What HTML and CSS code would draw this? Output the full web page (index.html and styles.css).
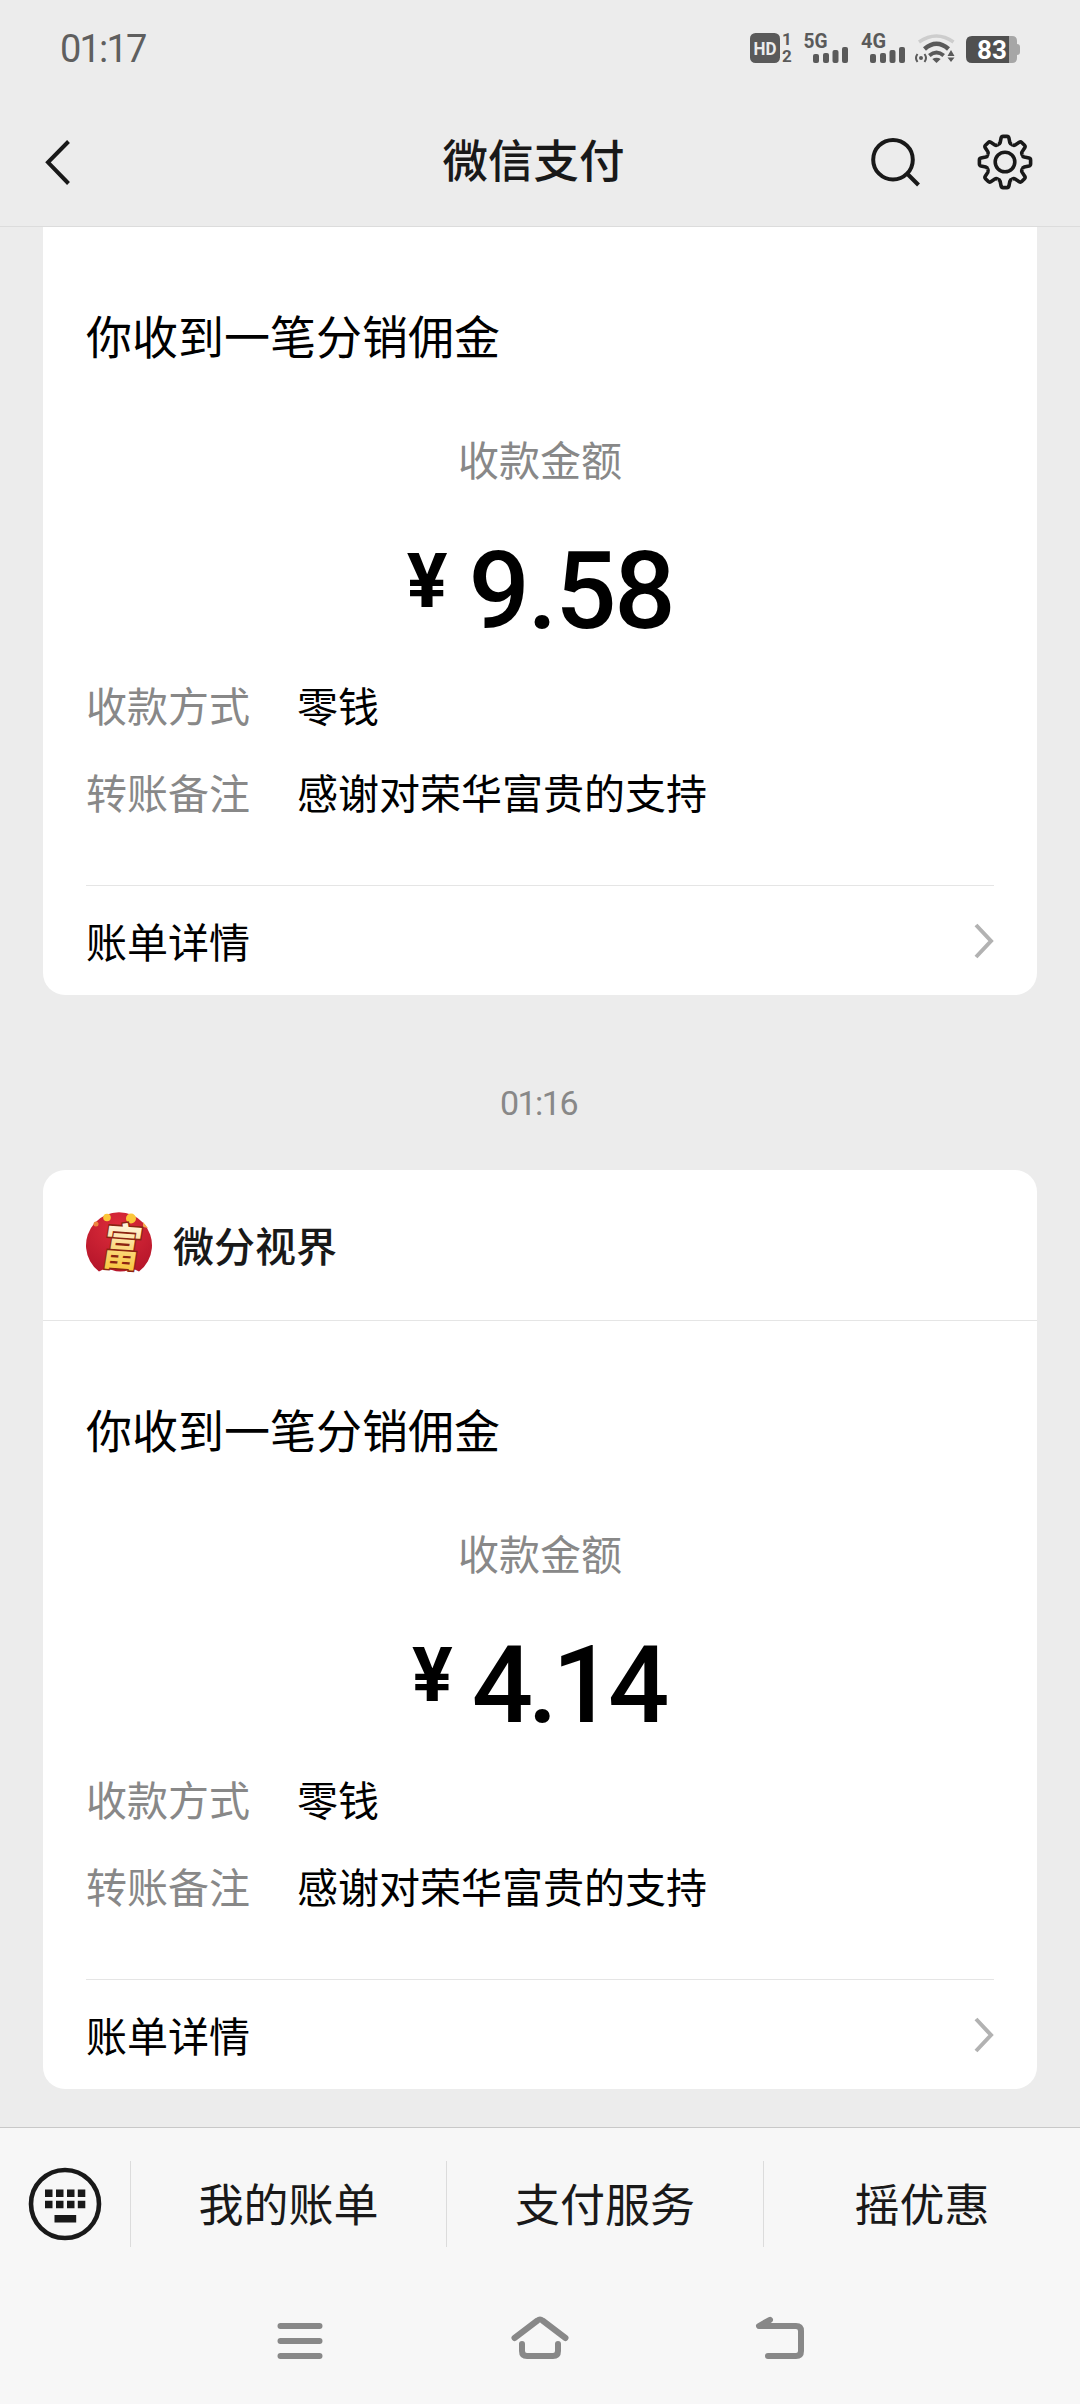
FILE: index.html
```html
<!DOCTYPE html>
<html lang="zh-CN">
<head>
<meta charset="utf-8">
<title>微信支付</title>
<link rel="stylesheet" href="styles.css">
</head>
<body>
<header class="top">
  <div class="status">
    <span class="clock">01:17</span>
    <svg class="status-icons" width="274" height="32" viewBox="748 32 274 32">
      <g fill="#5a5a5a">
        <rect x="750" y="33" width="30" height="30" rx="5.5"/>
        <text class="st-hd" x="765" y="55" textLength="23" lengthAdjust="spacingAndGlyphs" text-anchor="middle">HD</text>
        <text class="st-sim" x="787" y="45" text-anchor="middle">1</text>
        <text class="st-sim" x="787" y="62" text-anchor="middle">2</text>
        <text class="st-net" x="803.5" y="47.5" textLength="24" lengthAdjust="spacingAndGlyphs">5G</text>
        <text class="st-net" x="861" y="47.5" textLength="25" lengthAdjust="spacingAndGlyphs">4G</text>
        <g id="bars"><rect x="813" y="54" width="6" height="9" rx="2"/><rect x="823" y="53" width="6" height="10" rx="2"/><rect x="832.500" y="50" width="6" height="13" rx="2"/><rect x="842" y="47" width="6" height="16" rx="2"/></g>
        <use href="#bars" x="57"/>
        <path d="M936.500 63L932.300 59Q936.500 56.500 940.700 59Z"/>
        <circle cx="921" cy="58" r="2"/>
        <path d="M947.500 56L951 50L954.500 56ZM947.500 57.500L951 62L954.500 57.500Z"/>
      </g>
      <g fill="none" stroke="#5a5a5a">
        <path d="M929.300 55.500Q936.500 49.500 943.700 55.500" stroke-width="4"/>
        <path d="M924.500 49Q936.500 38.500 948.500 49" stroke-width="4.500"/>
        <path d="M919 42Q936.500 30 953.500 42" stroke="#cdcdcd" stroke-width="3.500"/>
        <path d="M917.500 54Q914.500 58 917.500 62M924.500 54Q927.500 58 924.500 62" stroke-width="2"/>
      </g>
      <path d="M1009 36H1012Q1017 36 1017 41V44Q1020 44 1020 47V52Q1020 55 1017 55V58Q1017 63 1012 63H1009Z" fill="#a6a6a6"/>
      <path d="M1009 36H972Q966 36 966 42V57Q966 63 972 63H1009Z" fill="#505050"/>
      <text class="st-bat" x="992" y="59" text-anchor="middle">83</text>
    </svg>
  </div>
  <nav class="bar">
    <div class="tools-left"><svg width="30" height="50" viewBox="43 136 30 50"><path d="M68.500 140.500L48 161.300L68.500 182.500" fill="none" stroke="#191919" stroke-width="4"/></svg></div>
    <h1 class="title">微信支付</h1>
    <div class="tools">
      <svg width="56" height="56" viewBox="868 133 56 56"><g fill="none" stroke="#191919" stroke-width="4"><circle cx="893" cy="158.700" r="19.800"/><path d="M907 172.500L918.500 184"/></g></svg>
      <svg width="58" height="58" viewBox="-29 -29 58 58"><g fill="none" stroke="#191919" stroke-width="3.600"><circle r="9.800"/>
        <path id="tooth" d="M-7.200-17.400Q-5.300-17.600-4.900-19.200L-3.900-24Q-3.500-25.600-2-25.600H2Q3.500-25.600 3.900-24L4.900-19.200Q5.300-17.600 7.200-17.400"/>
        <use href="#tooth" transform="rotate(45)"/><use href="#tooth" transform="rotate(90)"/><use href="#tooth" transform="rotate(135)"/><use href="#tooth" transform="rotate(180)"/><use href="#tooth" transform="rotate(225)"/><use href="#tooth" transform="rotate(270)"/><use href="#tooth" transform="rotate(315)"/></g></svg>
    </div>
  </nav>
</header>

<main class="feed">
  <article class="card card-cut">
    <div class="card-body">
      <h2 class="headline">你收到一笔分销佣金</h2>
      <div class="caption">收款金额</div>
      <div class="amount"><span class="yen">¥</span><span class="num">9.58</span></div>
      <dl class="rows">
        <dt>收款方式</dt><dd>零钱</dd>
        <dt>转账备注</dt><dd>感谢对荣华富贵的支持</dd>
      </dl>
      <div class="detail"><span>账单详情</span><svg width="20" height="36" viewBox="0 0 20 36"><path d="M2 2L17 18L2 34" fill="none" stroke="#b2b2b2" stroke-width="4"/></svg></div>
    </div>
  </article>

  <time class="stamp">01:16</time>

  <article class="card">
    <div class="sender">
      <svg width="66" height="66" viewBox="0 0 66 66">
        <defs>
          <radialGradient id="red" cx=".5" cy=".25" r=".8"><stop offset="0" stop-color="#de2d3b"/><stop offset="1" stop-color="#b5152a"/></radialGradient>
          <linearGradient id="gold" x1="0" y1="0" x2="0" y2="1"><stop offset=".25" stop-color="#fff3d8"/><stop offset=".55" stop-color="#fbd982"/><stop offset=".95" stop-color="#f7c12c"/></linearGradient>
        </defs>
        <path d="M13 59.500A33 33 0 1 1 53 59.500Q47 56 43 58Q34 61 26 58Q18 56 13 59.500Z" fill="url(#red)"/>
        <g fill="#fbc63a"><circle cx="21" cy="5.500" r="3.800"/><circle cx="45" cy="6.500" r="5"/><circle cx="10" cy="12" r="2.500" fill="#ee8540"/><path d="M57 10L62 16L57 15Z" fill="#f6a64b"/></g>
        <text class="logo" text-anchor="middle" transform="translate(33.500 53) rotate(4) skewX(-5) scale(1 1.300)">富</text>
      </svg>
      <span class="sender-name">微分视界</span>
    </div>
    <div class="card-body">
      <h2 class="headline">你收到一笔分销佣金</h2>
      <div class="caption">收款金额</div>
      <div class="amount amount-tight"><span class="yen">¥</span><span class="num">4.14</span></div>
      <dl class="rows">
        <dt>收款方式</dt><dd>零钱</dd>
        <dt>转账备注</dt><dd>感谢对荣华富贵的支持</dd>
      </dl>
      <div class="detail"><span>账单详情</span><svg width="20" height="36" viewBox="0 0 20 36"><path d="M2 2L17 18L2 34" fill="none" stroke="#b2b2b2" stroke-width="4"/></svg></div>
    </div>
  </article>
</main>

<footer class="bottom">
  <div class="menu">
    <div class="keyboard"><svg width="74" height="74" viewBox="-37 -37 74 74"><circle r="34" fill="none" stroke="#191919" stroke-width="4.600"/><path fill="#191919" d="M-20-14.500h7.500v7.500h-7.500zM-9-14.500h7.500v7.500h-7.500zM2-14.500h7.500v7.500h-7.500zM12.800-14.500h7.500v7.500h-7.500zM-20-3.300h7.500v7.500h-7.500zM-9-3.300h7.500v7.500h-7.500zM2-3.300h7.500v7.500h-7.500zM12.800-3.300h7.500v7.500h-7.500zM-10.500 11h21.700v7.500h-21.700z"/></svg></div>
    <div class="menu-item">我的账单</div>
    <div class="menu-item">支付服务</div>
    <div class="menu-item">摇优惠</div>
  </div>
  <div class="sysnav">
    <svg width="60" height="50" viewBox="270 2316 60 50"><path d="M280.500 2326H319.500M280.500 2341H319.500M280.500 2356H319.500" class="nav-line"/></svg>
    <svg width="60" height="50" viewBox="510 2316 60 50"><path d="M514.500 2338L537.500 2320.500Q540 2318.500 542.500 2320.500L565.500 2338M522 2344V2351Q522 2356 527 2356H553Q558 2356 558 2351V2344" class="nav-line"/></svg>
    <svg width="60" height="50" viewBox="750 2316 60 50"><path d="M770 2319.800L759 2326H796Q801 2326 801 2331V2351Q801 2356 796 2356H768" class="nav-line"/></svg>
  </div>
</footer>
</body>
</html>
```
FILE: styles.css
```css
* { box-sizing: border-box; }
body {
  margin: 0;
  width: 1080px;
  height: 2404px;
  display: flex;
  flex-direction: column;
  overflow: hidden;
  background: #ececec;
  color: #000;
  font-family: Roboto, "Noto Sans CJK SC", sans-serif;
}
svg { display: block; overflow: visible; flex: none; }
h1, h2, dl, dd { margin: 0; font-weight: 400; }

.top { height: 227px; border-bottom: 1px solid #dcdcdc; flex: none; }
.status {
  height: 96px;
  padding: 0 58px 0 60px;
  display: flex;
  justify-content: space-between;
  align-items: center;
}
.clock { font-size: 38px; letter-spacing: -1.8px; color: #5f5f5f; padding-top: 2px; }
.status-icons { font-family: Roboto, sans-serif; font-weight: 700; }
.st-hd { font-size: 19px; fill: #ececec; }
.st-sim { font-size: 17px; }
.st-net { font-size: 20px; }
.st-bat { font-size: 26px; fill: #fff; }

.bar {
  height: 131px;
  display: grid;
  grid-template-columns: 1fr auto 1fr;
  align-items: center;
  padding: 0 46px 0 37px;
}
.tools-left { padding-left: 6px; }
.title { font-size: 45.5px; font-weight: 500; color: #191919; line-height: 66px; padding: 3px 4px 0 0; }
.tools { display: flex; justify-content: flex-end; align-items: center; gap: 52px; }

.feed { flex: 1; padding: 0 43px; }
.card { background: #fff; border-radius: 22px; height: 919px; }
.card-cut { height: 768px; border-radius: 0 0 22px 22px; }
.sender {
  height: 151px;
  border-bottom: 1px solid #e5e5e5;
  padding: 0 43px;
  display: flex;
  align-items: center;
  gap: 21px;
}
.sender-name { font-size: 41px; font-weight: 500; color: #191919; padding-bottom: 3px; }
.logo {
  font: 700 38px "Noto Sans CJK SC", sans-serif;
  fill: url(#gold);
  stroke: #8b2412;
  stroke-width: 2.5px;
  paint-order: stroke;
}
.card-body { padding: 78px 43px 0; }
.headline { font-size: 46px; line-height: 66px; }
.caption { margin-top: 61px; font-size: 41px; line-height: 60px; color: #888; text-align: center; }
.amount {
  height: 126px;
  margin-top: 35px;
  display: flex;
  justify-content: center;
  align-items: flex-start;
  gap: 21px;
  font-weight: 500;
}
.yen { font-size: 76px; line-height: 108px; font-weight: 700; }
.num { font-size: 108px; line-height: 128px; letter-spacing: -2.4px; }
.amount-tight { gap: 19px; padding-right: 4px; }
.amount-tight .num { letter-spacing: -5.5px; }
.rows {
  display: grid;
  grid-template-columns: 211px 1fr;
  row-gap: 27px;
  margin-top: 25px;
  font-size: 41px;
  line-height: 60px;
}
.rows dt { color: #888; }
.detail {
  margin-top: 60px;
  height: 111px;
  border-top: 1px solid #e5e5e5;
  display: flex;
  justify-content: space-between;
  align-items: center;
  font-size: 41px;
}
.detail span { padding-bottom: 3px; }
.stamp {
  display: flex;
  height: 175px;
  padding: 40px 3px 0 0;
  align-items: center;
  justify-content: center;
  font-size: 34px;
  letter-spacing: -1.5px;
  color: #888;
}

.bottom { height: 277px; flex: none; background: #f7f7f7; border-top: 1px solid #c8c8c8; }
.menu {
  height: 151px;
  display: grid;
  grid-template-columns: 130px 316px 317px 317px;
  align-items: center;
}
.keyboard { display: flex; justify-content: center; }
.menu-item {
  height: 86px;
  border-left: 1px solid #dcdcdc;
  display: flex;
  align-items: center;
  justify-content: center;
  padding-bottom: 2px;
  font-size: 45px;
  color: #191919;
}
.sysnav { display: flex; justify-content: center; gap: 180px; padding-top: 37px; }
.nav-line { fill: none; stroke: #888; stroke-width: 6px; stroke-linecap: round; stroke-linejoin: round; }
```
